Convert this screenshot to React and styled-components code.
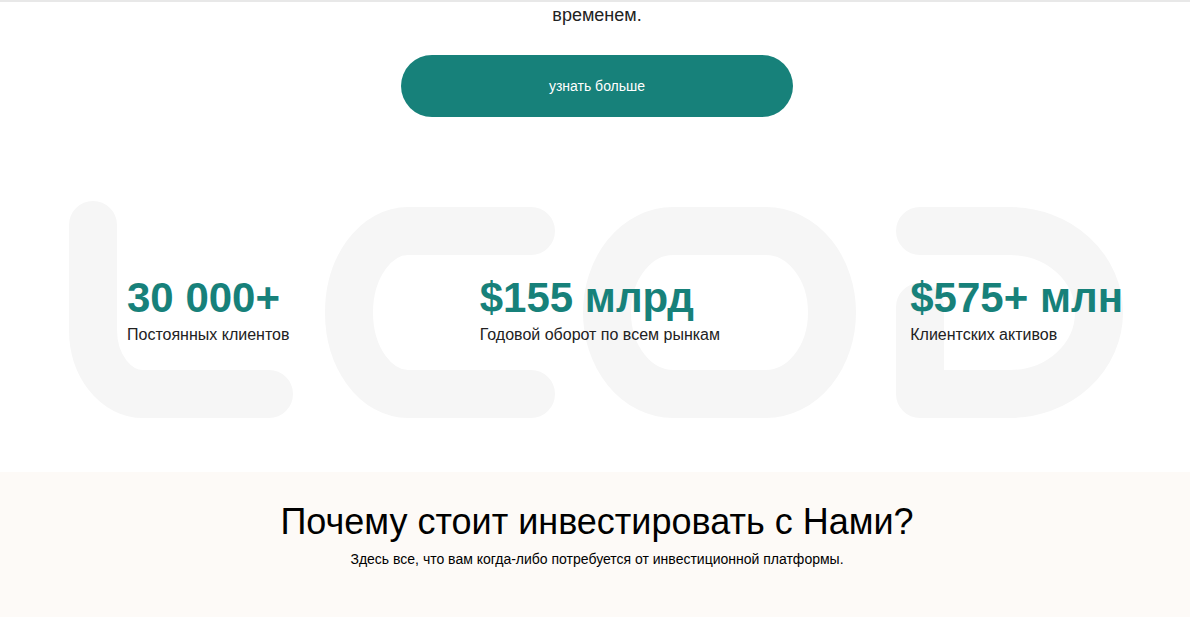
import styled, { createGlobalStyle } from 'styled-components'

const GlobalStyle = createGlobalStyle`
  html, body {
    margin: 0;
    padding: 0;
    background: #ffffff;
  }
  body {
    font-family: "Liberation Sans", Arial, sans-serif;
    color: #222222;
  }
`

const Page = styled.div`
  width: 100%;
  overflow: hidden;
`

const TopLine = styled.div`
  height: 2px;
  background: #e8e8e8;
`

const Intro = styled.section`
  display: flex;
  flex-direction: column;
  align-items: center;
  padding-left: 4px;
`

const IntroText = styled.p`
  margin: 0;
  font-size: 18px;
  line-height: 27px;
  color: #222222;
`

const MoreButton = styled.button`
  margin-top: 26px;
  width: 392px;
  height: 62px;
  border: none;
  border-radius: 31px;
  background: #17817a;
  color: #ffffff;
  font-family: inherit;
  font-size: 14px;
  cursor: pointer;
`

const Stats = styled.section`
  position: relative;
  height: 355px;
`

const Backdrop = styled.svg`
  position: absolute;
  top: 0;
  left: 0;
  width: 1190px;
  height: 355px;
  z-index: 0;
`

const StatsRow = styled.div`
  position: relative;
  z-index: 1;
  display: flex;
  justify-content: space-between;
  align-items: flex-start;
  padding: 157px 67px 0 127px;
`

const Stat = styled.div`
  display: flex;
  flex-direction: column;
  gap: 4px;
`

const Value = styled.div`
  font-size: 42px;
  font-weight: 700;
  color: #17817a;
  line-height: normal;
  white-space: nowrap;
`

const Label = styled.div`
  font-size: 16px;
  color: #222222;
  line-height: normal;
`

const Why = styled.section`
  display: flex;
  flex-direction: column;
  align-items: center;
  gap: 8px;
  padding: 29px 0 60px 4px;
  background: #fdfaf7;
`

const WhyTitle = styled.h2`
  margin: 0;
  font-size: 36px;
  font-weight: 400;
  line-height: normal;
  color: #000000;
`

const WhySub = styled.p`
  margin: 0;
  font-size: 14px;
  line-height: normal;
  color: #000000;
`

const stats = [
  { value: '30 000+', label: 'Постоянных клиентов' },
  { value: '$155 млрд', label: 'Годовой оборот по всем рынкам' },
  { value: '$575+ млн', label: 'Клиентских активов' },
]

function LogoBackdrop() {
  return (
    <Backdrop viewBox="0 117 1190 355" aria-hidden="true">
      <g
        fill="none"
        stroke="#f6f6f6"
        strokeWidth="48"
        strokeLinecap="round"
        strokeLinejoin="round"
      >
        <path d="M93 225 V330 A50 64 0 0 0 143 394 H269" />
        <path d="M531 231 H408 A59 81.5 0 0 0 408 394 H531" />
        <rect x="607" y="231" width="225" height="163" rx="66" ry="81.5" />
        <path d="M920 231 H1010 A89 81.5 0 0 1 1010 394 H920 V307" />
      </g>
    </Backdrop>
  )
}

export default function App() {
  return (
    <Page>
      <GlobalStyle />
      <TopLine />
      <Intro>
        <IntroText>временем.</IntroText>
        <MoreButton>узнать больше</MoreButton>
      </Intro>
      <Stats>
        <LogoBackdrop />
        <StatsRow>
          {stats.map((s) => (
            <Stat key={s.value}>
              <Value>{s.value}</Value>
              <Label>{s.label}</Label>
            </Stat>
          ))}
        </StatsRow>
      </Stats>
      <Why>
        <WhyTitle>Почему стоит инвестировать с Нами?</WhyTitle>
        <WhySub>
          Здесь все, что вам когда-либо потребуется от инвестиционной платформы.
        </WhySub>
      </Why>
    </Page>
  )
}
